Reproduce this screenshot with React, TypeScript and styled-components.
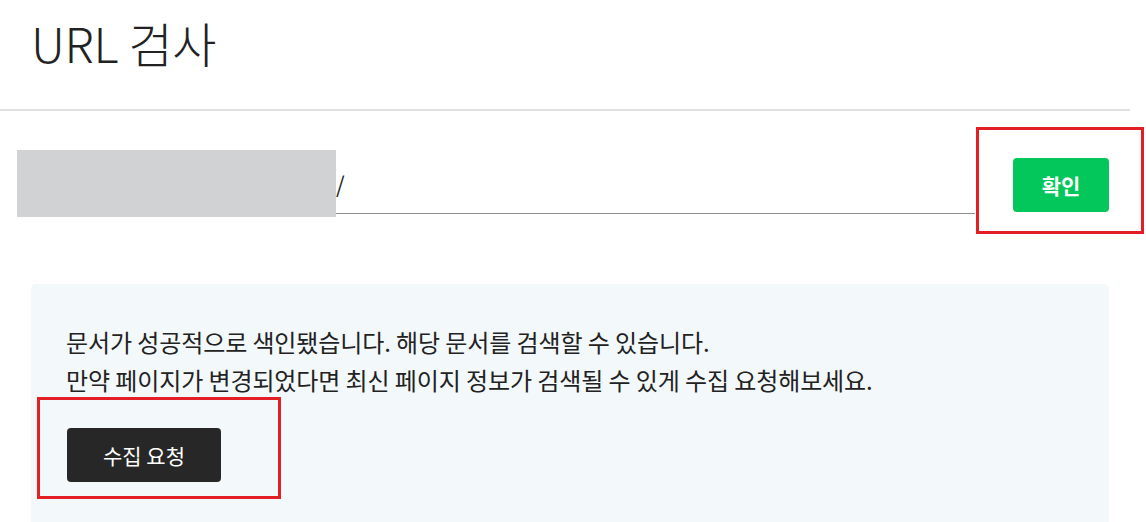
import React from "react";
import styled, { createGlobalStyle } from "styled-components";

const Global = createGlobalStyle`
  html, body { margin: 0; padding: 0; background: #fff; }
  body {
    font-family: "Noto Sans CJK KR", "Noto Sans", sans-serif;
    color: #222;
    overflow: hidden;
  }
  * { box-sizing: border-box; }
`;

const Page = styled.div`
  width: 1146px;
  height: 522px;
  overflow: hidden;
`;

const Header = styled.header`
  width: 1130px;
  height: 111px;
  padding-left: 31px;
  border-bottom: 2px solid #e1e1e1;
  display: flex;
  align-items: flex-start;
`;

const Title = styled.h1`
  margin: 0;
  margin-top: 12px;
  font-size: 48px;
  line-height: 60px;
  font-weight: 300;
  letter-spacing: -0.3px;
  color: #222;
`;

const Main = styled.main`
  width: 1109px;
`;

const InputRow = styled.div`
  display: flex;
  align-items: flex-start;
  padding-left: 17px;
  margin-top: 39px;
  gap: 38px;
`;

const UrlField = styled.div`
  width: 958px;
  height: 64px;
  border-bottom: 1px solid #8e8e8e;
  display: flex;
  align-items: flex-start;
`;

const Redacted = styled.span`
  display: block;
  width: 319px;
  height: 67px;
  background: #d1d2d4;
  flex: none;
`;

const UrlText = styled.span`
  font-size: 22px;
  line-height: 22px;
  margin-top: 22px;
  color: #222;
`;

const Annotated = styled.div<{ $l: number; $t: number; $r: number; $b: number }>`
  position: relative;
  flex: none;
  &::after {
    content: "";
    position: absolute;
    left: ${(p) => -p.$l}px;
    top: ${(p) => -p.$t}px;
    right: ${(p) => -p.$r}px;
    bottom: ${(p) => -p.$b}px;
    border: 3px solid #e31e24;
    pointer-events: none;
  }
`;

const ConfirmButton = styled.button`
  display: block;
  width: 96px;
  height: 54px;
  border: 0;
  border-radius: 4px;
  background: #03c75a;
  color: #fff;
  font-family: inherit;
  font-size: 21px;
  font-weight: 700;
  cursor: pointer;
`;

const ConfirmWrap = styled.div`
  margin-top: 8px;
`;

const InfoBox = styled.section`
  margin-left: 31px;
  margin-top: 70px;
  height: 260px;
  background: #f3f8fb;
  border-radius: 5px;
  padding: 39px 0 0 35px;
`;

const Message = styled.p`
  margin: 0;
  font-size: 24px;
  line-height: 38px;
  color: #222;
  letter-spacing: -0.1px;
`;

const CollectButton = styled.button`
  display: block;
  width: 154px;
  height: 54px;
  border: 0;
  border-radius: 4px;
  background: #272727;
  color: #fff;
  font-family: inherit;
  font-size: 21px;
  font-weight: 400;
  cursor: pointer;
`;

const ButtonWrap = styled.div`
  margin-top: 29px;
  margin-left: 1px;
  display: inline-block;
`;

export default function App() {
  return (
    <Page>
      <Global />
      <Header>
        <Title>URL 검사</Title>
      </Header>
      <Main>
        <InputRow>
          <UrlField>
            <Redacted />
            <UrlText>/</UrlText>
          </UrlField>
          <ConfirmWrap>
            <Annotated $l={37} $t={31} $r={35} $b={22}>
              <ConfirmButton>확인</ConfirmButton>
            </Annotated>
          </ConfirmWrap>
        </InputRow>
        <InfoBox>
          <Message>
            문서가 성공적으로 색인됐습니다. 해당 문서를 검색할 수 있습니다.
            <br />
            만약 페이지가 변경되었다면 최신 페이지 정보가 검색될 수 있게 수집 요청해보세요.
          </Message>
          <ButtonWrap>
            <Annotated $l={30} $t={31} $r={60} $b={17}>
              <CollectButton>수집 요청</CollectButton>
            </Annotated>
          </ButtonWrap>
        </InfoBox>
      </Main>
    </Page>
  );
}
